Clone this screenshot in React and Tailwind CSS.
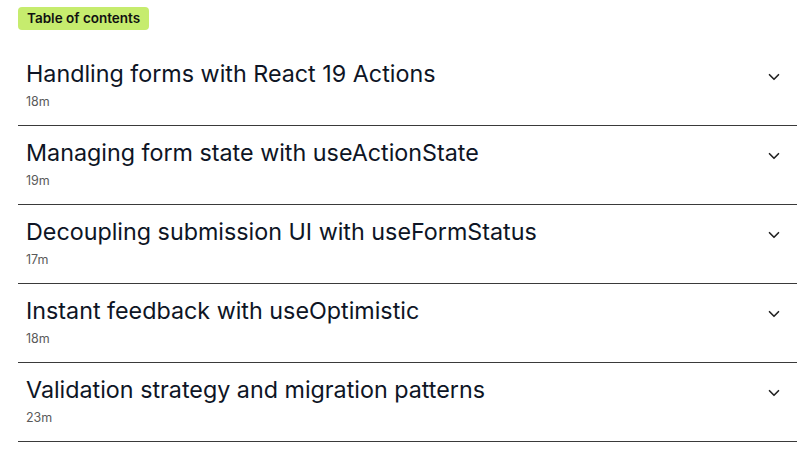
import { ChevronDown } from "lucide-react";

const chapters = [
  { title: "Handling forms with React 19 Actions", time: "18m" },
  { title: "Managing form state with useActionState", time: "19m" },
  { title: "Decoupling submission UI with useFormStatus", time: "17m" },
  { title: "Instant feedback with useOptimistic", time: "18m" },
  { title: "Validation strategy and migration patterns", time: "23m" },
];

const Row = ({ title, time }) => (
  <div className="flex items-start justify-between border-b border-[#3a3a3a] pl-2 pr-[14px] pt-[13px] pb-[15px]">
    <div className="flex flex-col">
      <span className="text-[23.3px] leading-[28px] text-[#0e1525]">{title}</span>
      <span className="mt-[6px] text-[12.5px] leading-[16px] text-[#5a5a5a]">{time}</span>
    </div>
    <ChevronDown className="mt-[8px] h-[18px] w-[18px] text-[#222]" strokeWidth={2.2} />
  </div>
);

export default function App() {
  return (
    <div
      className="min-h-[462px] w-[807px] bg-white pl-[18px] pr-[10px] pt-[7px]"
      style={{ fontFamily: "Inter, 'Noto Sans', sans-serif" }}
    >
      <div className="w-fit rounded-[4px] bg-[#c6ec6e] px-[9px] py-[4px] text-[13.5px] font-semibold leading-[15px] text-[#111]">
        Table of contents
      </div>
      <div className="mt-[17px]">
        {chapters.map((c) => (
          <Row key={c.title} {...c} />
        ))}
      </div>
    </div>
  );
}
